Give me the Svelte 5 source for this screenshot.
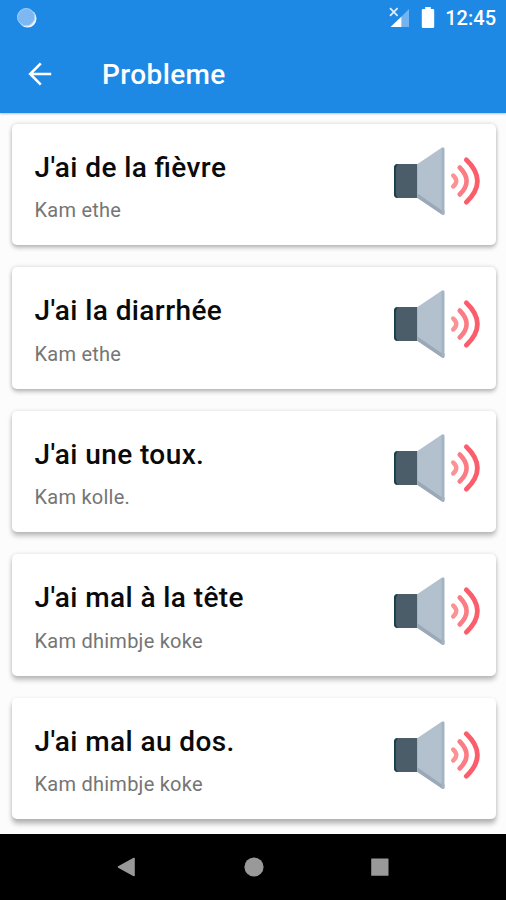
<script>
    let title = "Probleme";

    let phrases = [
        { fr: "J'ai de la fièvre", trad: "Kam ethe" },
        { fr: "J'ai la diarrhée", trad: "Kam ethe" },
        { fr: "J'ai une toux.", trad: "Kam kolle." },
        { fr: "J'ai mal à la tête", trad: "Kam dhimbje koke" },
        { fr: "J'ai mal au dos.", trad: "Kam dhimbje koke" },
    ];
</script>

<div class="screen">
    <header>
        <div class="status">
            <svg class="sync" width="22" height="22" viewBox="0 0 22 22">
                <circle cx="11.6" cy="11.6" r="8.9" fill="#f2f9fe" />
                <circle cx="10" cy="10" r="8.6" fill="#7db8f2" />
                <circle cx="10.2" cy="10.2" r="8.7" fill="none" stroke="#a5cff6" stroke-width="1" />
            </svg>
            <span class="right">
                <svg width="22" height="22" viewBox="0 0 22 22">
                    <path d="M12.5 9.5 L20 2 V20 H12.5 Z" fill="#73b3f0" />
                    <path d="M12.5 9.5 V20 H1.5 Z" fill="#fff" />
                    <path d="M1 1.2 L8.6 8.8 M8.6 1.2 L1 8.8" stroke="#e3f0fc" stroke-width="1.7" />
                </svg>
                <svg class="battery" width="14" height="22" viewBox="0 0 14 22">
                    <path d="M4.2 0 H9.8 V2 H12 Q13.2 2 13.2 3.2 V19.8 Q13.2 21 12 21 H2 Q0.8 21 0.8 19.8 V3.2 Q0.8 2 2 2 H4.2 Z" fill="#fff" />
                </svg>
                <span class="time">12:45</span>
            </span>
        </div>
        <div class="toolbar">
            <svg width="24" height="24" viewBox="0 0 24 24">
                <path d="M12.8 1.4 L2.2 12 L12.8 22.6 M2.4 12 H23.2" fill="none" stroke="#fff" stroke-width="2.6" />
            </svg>
            <h1>{title}</h1>
        </div>
    </header>

    <main>
        {#each phrases as phrase}
            <div class="card">
                <div class="texte">
                    <h2>{phrase.fr}</h2>
                    <p>{phrase.trad}</p>
                </div>
                <svg class="speaker" width="88" height="70" viewBox="0 0 88 70">
                    <path d="M24.5 18 H5 Q1 18 1 22 V48 Q1 52 5 52 H24.5 Z" fill="#4b5d68" />
                    <path d="M5 18 Q1 18 1 22 V48 Q1 52 5 52 Q2.8 50 2.8 47 V23 Q2.8 20 5 18" fill="#153f48" />
                    <path d="M24.5 18 L49 1.4 Q51.5 0.5 51.5 3 V67 Q51.5 69.5 49 68.6 L24.5 52 Z" fill="#b2c1cd" />
                    <path d="M24.5 47.5 L49 64.5 L51.5 64.5 V67 Q51.5 69.5 49 68.6 L24.5 52 Z" fill="#9aa8b8" />
                    <path d="M49.9 2 V67.8" stroke="#a3b3c2" stroke-width="2.4" />
                    <g fill="none" stroke-linecap="round">
                        <path d="M60.2 29.5 Q66.4 35 60.2 40.5" stroke="#fb9295" stroke-width="4.4" />
                        <path d="M66.7 21.5 Q80.5 35 66.7 48.5" stroke="#fb7c84" stroke-width="4.6" />
                        <path d="M73.3 13.8 Q95.5 35 73.3 56.2" stroke="#fb5d6b" stroke-width="4.8" />
                    </g>
                </svg>
            </div>
        {/each}
    </main>

    <nav>
        <svg width="20" height="20" viewBox="0 0 20 20">
            <path d="M17 1.5 V18.5 L1.5 10 Z" fill="#999" stroke="#999" stroke-width="1.6" stroke-linejoin="round" />
        </svg>
        <svg width="20" height="20" viewBox="0 0 20 20">
            <circle cx="10" cy="10" r="9.6" fill="#999" />
        </svg>
        <svg width="20" height="20" viewBox="0 0 20 20">
            <rect x="1.2" y="1.5" width="17.3" height="17.3" rx="0.6" fill="#999" />
        </svg>
    </nav>
</div>

<style>
    :global(body) {
        margin: 0;
    }
    .screen {
        display: flex;
        flex-direction: column;
        width: 506px;
        height: 900px;
        overflow: hidden;
        background: #fcfcfc;
        font-family: Roboto, sans-serif;
    }
    svg {
        display: block;
        flex: none;
    }
    h1,
    h2,
    p {
        margin: 0;
        font-weight: 500;
        white-space: nowrap;
    }
    header {
        z-index: 1;
        flex: none;
        height: 112.6px;
        background: #1e88e5;
        color: #fff;
        box-shadow: 0 1px 2px rgba(0, 0, 0, 0.25);
    }
    .status {
        display: flex;
        justify-content: space-between;
        align-items: center;
        height: 36px;
        padding: 0 10px 0 16px;
    }
    .right {
        display: flex;
        align-items: center;
    }
    .battery {
        margin: 0 10px 0 10px;
    }
    .time {
        font-size: 20px;
        font-weight: 500;
        line-height: 36px;
    }
    .toolbar {
        display: flex;
        align-items: center;
        gap: 50px;
        height: 76px;
        padding-left: 28px;
    }
    h1 {
        padding-top: 2px;
        font-size: 28px;
        line-height: 36px;
        letter-spacing: 0.4px;
    }
    main {
        display: flex;
        flex: 1;
        flex-direction: column;
        gap: 22px;
        min-height: 0;
        padding: 11.4px 10px 0 12px;
        overflow: hidden;
    }
    .card {
        display: flex;
        flex: none;
        justify-content: space-between;
        height: 121.4px;
        box-sizing: border-box;
        padding: 22px 15px 0 22.5px;
        border-radius: 5px;
        background: #fff;
        box-shadow:
            0 3px 4px rgba(0, 0, 0, 0.22),
            0 0 4px rgba(0, 0, 0, 0.16);
    }
    /* the shadow gets deeper down the screen */
    .card:nth-child(n + 3) {
        box-shadow:
            0 4px 5px rgba(0, 0, 0, 0.24),
            0 0 4px rgba(0, 0, 0, 0.12);
    }
    .card:nth-child(n + 5) {
        box-shadow:
            0 5px 5px rgba(0, 0, 0, 0.25),
            0 1px 4px rgba(0, 0, 0, 0.1);
    }
    h2 {
        color: #0a0a0a;
        font-size: 28px;
        line-height: 43px;
        letter-spacing: 0.4px;
        font-feature-settings: "liga" 1;
    }
    p {
        margin-top: 8.5px;
        color: #757575;
        font-size: 20px;
        font-weight: 400;
        line-height: 26px;
        letter-spacing: 0.25px;
    }
    nav {
        display: flex;
        flex: none;
        justify-content: center;
        align-items: center;
        gap: 106.5px;
        height: 66.5px;
        padding-left: 1px;
        background: #000;
    }
</style>
